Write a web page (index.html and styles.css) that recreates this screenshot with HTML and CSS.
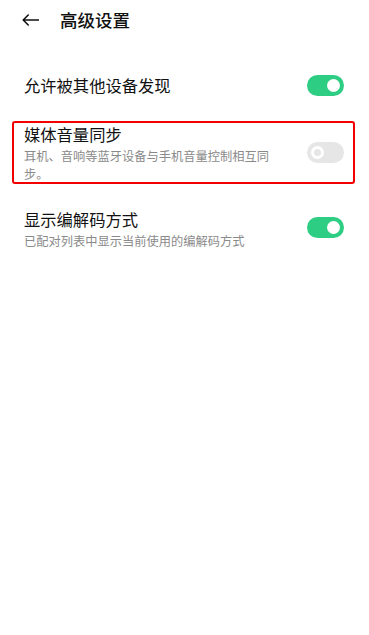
FILE: index.html
```html
<!DOCTYPE html>
<html lang="zh-CN">
<head>
<meta charset="utf-8">
<title>高级设置</title>
<link rel="stylesheet" href="styles.css">
</head>
<body>
<div class="page">
  <header class="topbar">
    <svg class="back" width="17" height="12" viewBox="0 0 17 12" aria-hidden="true">
      <path d="M16.5 6H1.2M6.2 1L1.2 6l5 5" fill="none" stroke="#111" stroke-width="1.6" stroke-linecap="round" stroke-linejoin="round"/>
    </svg>
    <h1 class="title">高级设置</h1>
  </header>

  <div class="row row-single">
    <div class="text"><div class="label">允许被其他设备发现</div></div>
    <div class="switch on"><span class="knob"></span></div>
  </div>

  <div class="row row-boxed">
    <div class="text">
      <div class="label">媒体音量同步</div>
      <div class="sub">耳机、音响等蓝牙设备与手机音量控制相互同步。</div>
    </div>
    <div class="switch off"><span class="knob"></span></div>
  </div>

  <div class="row row-last">
    <div class="text">
      <div class="label">显示编解码方式</div>
      <div class="sub">已配对列表中显示当前使用的编解码方式</div>
    </div>
    <div class="switch on top"><span class="knob"></span></div>
  </div>
</div>
</body>
</html>
```

FILE: styles.css
```css
html, body {
  margin: 0;
  padding: 0;
  background: #ffffff;
}
body {
  font-family: "Noto Sans CJK SC", "Noto Sans", sans-serif;
  color: #111111;
}
.page {
  width: 369px;
  height: 635px;
  display: flex;
  flex-direction: column;
}
.topbar {
  height: 40px;
  display: flex;
  align-items: center;
  padding-left: 22px;
}
.back {
  display: block;
}
.title {
  margin: 0 0 0 21px;
  font-size: 17.5px;
  font-weight: 500;
  line-height: 24px;
  color: #111;
}
.row {
  display: flex;
  align-items: center;
  justify-content: space-between;
  padding: 0 25px 0 24px;
}
.row-single {
  margin-top: 22px;
  height: 46px;
}
.label {
  font-size: 16.3px;
  line-height: 21px;
  color: #111;
}
.sub {
  font-size: 12.25px;
  line-height: 19px;
  color: #8a8a8a;
  margin-top: 2px;
}
.row-boxed {
  margin: 13px 14px 0 12px;
  height: 58px;
  border: 2px solid #f20000;
  border-radius: 3px;
  padding: 1px 9px 0 10px;
  align-items: flex-start;
}
.row-boxed .text {
  width: 252px;
}
.row-boxed .sub {
  line-height: 18px;
}
.row-boxed .switch {
  margin-top: 18px;
}
.row-last {
  margin-top: 25px;
  align-items: flex-start;
}
.switch {
  width: 37px;
  height: 21px;
  border-radius: 11px;
  box-sizing: border-box;
  padding: 4px;
  display: flex;
  flex-shrink: 0;
}
.switch.top {
  margin-top: 8px;
}
.switch .knob {
  width: 13px;
  height: 13px;
  border-radius: 50%;
  box-sizing: border-box;
}
.switch.on {
  background: #2dcd83;
  justify-content: flex-end;
}
.switch.on .knob {
  background: #ffffff;
}
.switch.off {
  background: #e6e6e6;
  justify-content: flex-start;
}
.switch.off .knob {
  border: 3px solid #ffffff;
  background: #e6e6e6;
}
```
